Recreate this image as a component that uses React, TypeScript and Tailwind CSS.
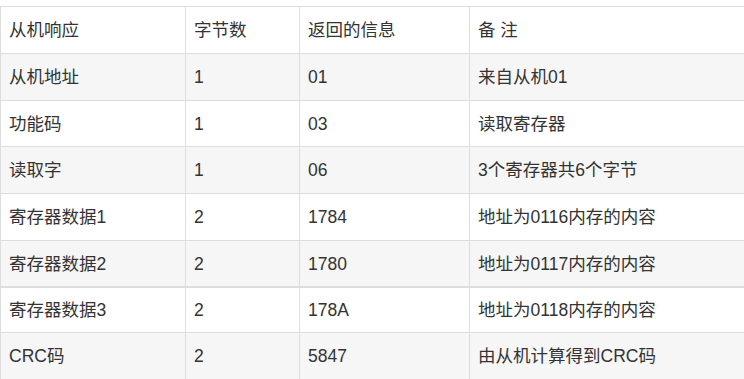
import React from "react";

const rows: { c: string[]; h: number; grey: boolean; b2?: boolean }[] = [
  { c: ["从机响应", "字节数", "返回的信息", "备 注"], h: 46, grey: false },
  { c: ["从机地址", "1", "01", "来自从机01"], h: 46, grey: true },
  { c: ["功能码", "1", "03", "读取寄存器"], h: 45, grey: false },
  { c: ["读取字", "1", "06", "3个寄存器共6个字节"], h: 46, grey: true },
  { c: ["寄存器数据1", "2", "1784", "地址为0116内存的内容"], h: 46, grey: false },
  { c: ["寄存器数据2", "2", "1780", "地址为0117内存的内容"], h: 45, grey: true, b2: true },
  { c: ["寄存器数据3", "2", "178A", "地址为0118内存的内容"], h: 44, grey: false },
  { c: ["CRC码", "2", "5847", "由从机计算得到CRC码"], h: 46, grey: true },
];

export default function App() {
  return (
    <div
      className="w-[744px] h-[379px] overflow-hidden bg-white pt-[6px]"
      style={{ fontFamily: '"Liberation Sans", "Noto Sans CJK SC", sans-serif' }}
    >
      <div className="border-l border-t border-[#dddddd] text-[17.5px] text-[#333333]">
        {rows.map((r, i) => (
          <div
            key={i}
            className={`grid grid-cols-[185px_114px_170px_1fr] ${r.b2 ? "border-b-2" : "border-b"} border-[#dddddd] ${r.grey ? "bg-[#f6f6f6]" : "bg-white"}`}
          >
            {r.c.map((t, j) => (
              <div
                key={j}
                className={`flex items-center pl-2 pt-[1px] whitespace-pre ${j < 3 ? "border-r border-[#dddddd]" : ""}`}
                style={{ height: r.h }}
              >
                {t}
              </div>
            ))}
          </div>
        ))}
      </div>
    </div>
  );
}
